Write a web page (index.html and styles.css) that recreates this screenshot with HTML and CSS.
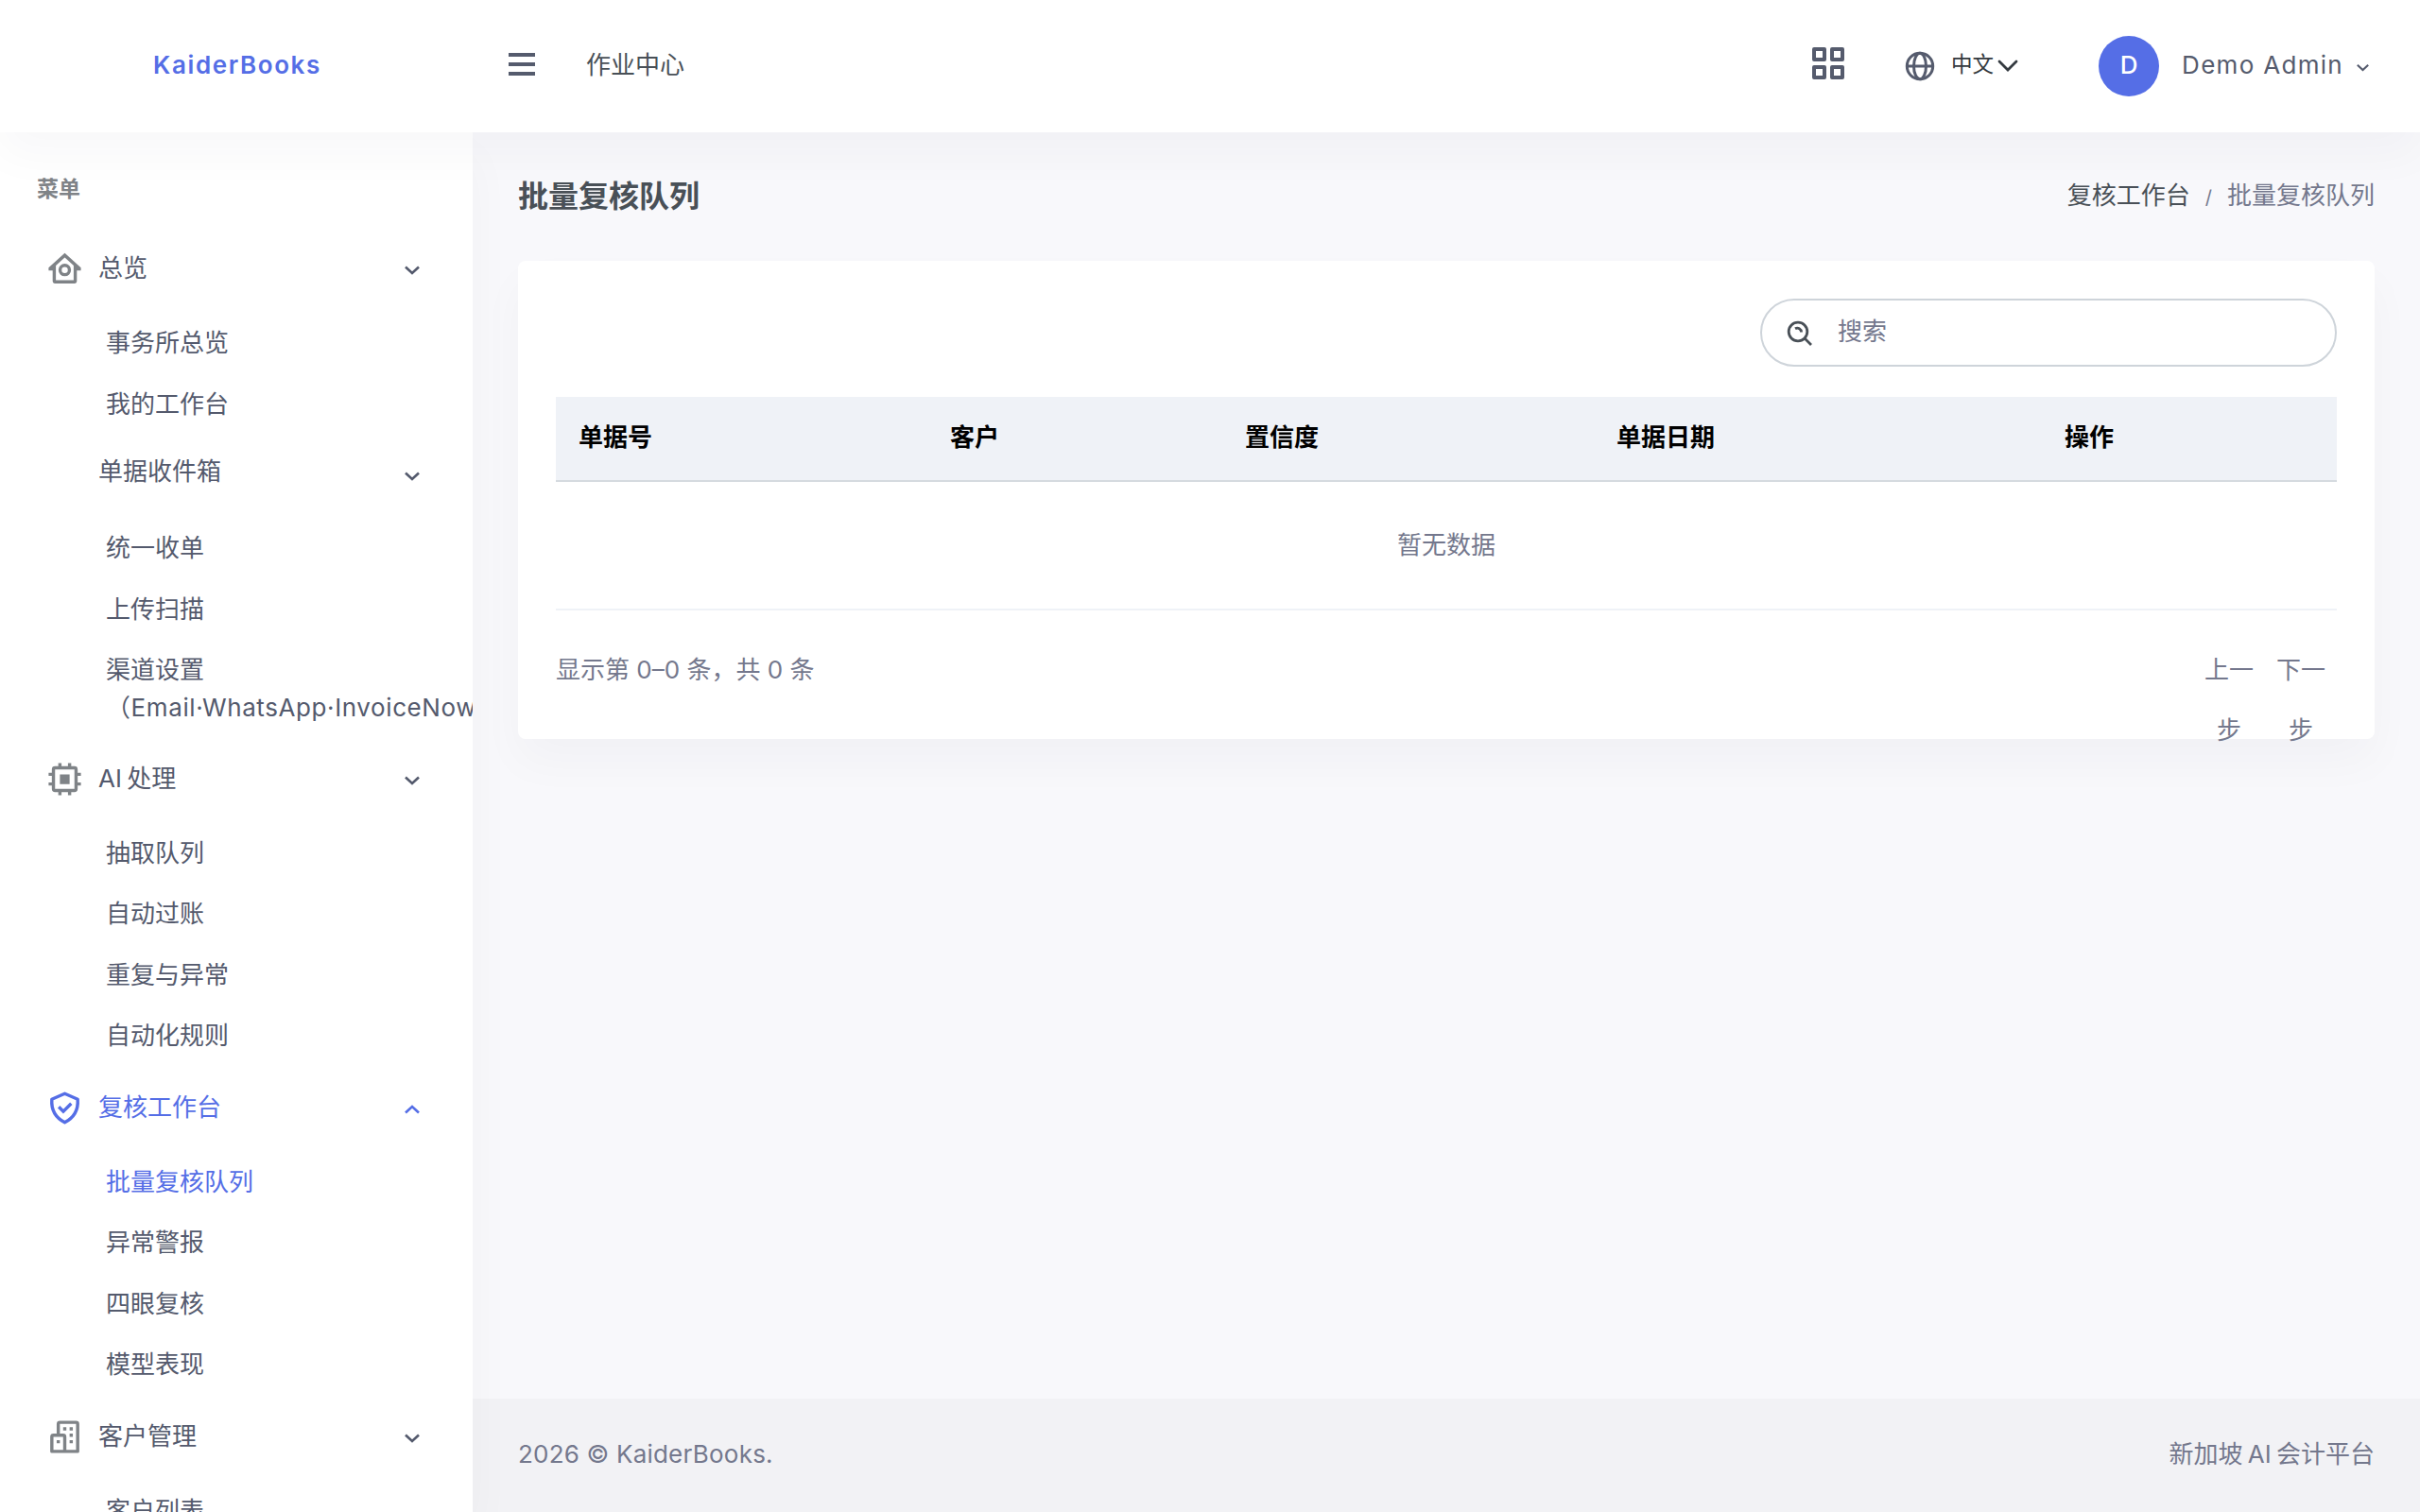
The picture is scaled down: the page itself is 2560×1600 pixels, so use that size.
FILE: index.html
```
<!DOCTYPE html>
<html lang="zh-CN">
<head>
    <meta charset="UTF-8">
    <meta name="viewport" content="width=device-width, initial-scale=1.0">
    <title>批量复核队列 | KaiderBooks</title>
    <link rel="stylesheet" href="styles.css">
</head>
<body>

    <!-- Shared icons -->
    <svg class="sprite">
        <symbol id="chevron" viewBox="0 0 16 10">
            <path d="M1 1.500 8 8l7-6.500" fill="none" stroke="currentColor" stroke-width="2.600"/>
        </symbol>
        <symbol id="chevron-thin" viewBox="0 0 22 14">
            <path d="M2 2l9 9 9-9" fill="none" stroke="currentColor" stroke-width="2.800" stroke-linecap="round"/>
        </symbol>
        <symbol id="home" viewBox="0 0 24 24">
            <path d="M12 2.200 2 11.300V13h2.500v6.500A1.500 1.500 0 0 0 6 21h12a1.500 1.500 0 0 0 1.500-1.500V13H22v-1.700zM6.500 19v-9L12 5l5.500 5v9z" fill="currentColor" fill-rule="evenodd"/>
            <circle cx="12" cy="12.700" r="2.900" fill="none" stroke="currentColor" stroke-width="2"/>
        </symbol>
        <symbol id="chip" viewBox="0 0 24 24">
            <rect x="5" y="5" width="14" height="14" rx="1" fill="none" stroke="currentColor" stroke-width="2"/>
            <path d="M9 9h6v6H9zM8 2h2v3H8zM14 2h2v3h-2zM8 19h2v3H8zM14 19h2v3h-2zM2 8h3v2H2zM2 14h3v2H2zM19 8h3v2h-3zM19 14h3v2h-3z" fill="currentColor"/>
        </symbol>
        <symbol id="shield" viewBox="0 0 24 24">
            <path d="M12 3.100 4 6.600C3.600 12 5.500 17.500 12 20.900 18.500 17.500 20.400 12 20 6.600z" fill="none" stroke="currentColor" stroke-width="2" stroke-linejoin="round"/>
            <path d="m8.300 11.300 2.800 2.800 4.900-4.900" fill="none" stroke="currentColor" stroke-width="2"/>
        </symbol>
        <symbol id="building" viewBox="0 0 24 24">
            <path d="M8 11V4a1 1 0 0 1 1-1h10a1 1 0 0 1 1 1v17H4v-9a1 1 0 0 1 1-1h6a1 1 0 0 1 1 1v9" fill="none" stroke="currentColor" stroke-width="2" stroke-linejoin="round"/>
            <path d="M11 6h2v2h-2zM15 6h2v2h-2zM15 10h2v2h-2zM15 14h2v2h-2zM7 14h2v2H7z" fill="currentColor"/>
        </symbol>
    </svg>

    <header class="topbar">
        <div class="brand">KaiderBooks</div>
        <svg class="menu-icon" viewBox="0 0 28 24"><path d="M0 2h28M0 12h28M0 22h28" stroke="currentColor" stroke-width="4"/></svg>
        <a class="job-center">作业中心</a>
        <div class="topbar-right">
            <svg class="grid-icon" viewBox="0 0 34 34">
                <path d="M2 2h11v11H2zM21 2h11v11H21zM2 21h11v11H2zM21 21h11v11H21z" fill="none" stroke="currentColor" stroke-width="4" stroke-linejoin="round"/>
            </svg>
            <div class="lang">
                <svg class="globe" viewBox="0 0 32 32">
                    <g fill="none" stroke="currentColor" stroke-width="3">
                        <circle cx="16" cy="16" r="13.700"/>
                        <ellipse cx="16" cy="16" rx="6.500" ry="13.700"/>
                        <path d="M2 16h28"/>
                    </g>
                </svg>
                <span>中文</span>
                <svg class="lang-arrow"><use href="#chevron-thin"/></svg>
            </div>
            <div class="user">
                <div class="avatar">D</div>
                <span class="user-name">Demo Admin</span>
                <svg class="user-arrow"><use href="#chevron"/></svg>
            </div>
        </div>
    </header>

    <div class="layout">
        <nav class="sidebar">
            <div class="menu-title">菜单</div>

            <div class="menu-group">
                <div class="menu-head"><svg class="icon"><use href="#home"/></svg><span>总览</span><svg class="arrow"><use href="#chevron"/></svg></div>
                <ul>
                    <li>事务所总览</li>
                    <li>我的工作台</li>
                </ul>
            </div>

            <div class="menu-group">
                <div class="menu-head no-icon"><span>单据收件箱</span><svg class="arrow"><use href="#chevron"/></svg></div>
                <ul>
                    <li>统一收单</li>
                    <li>上传扫描</li>
                    <li class="channels">渠道设置<br><span>（Email·WhatsApp·InvoiceNow）</span></li>
                </ul>
            </div>

            <div class="menu-group">
                <div class="menu-head"><svg class="icon"><use href="#chip"/></svg><span class="latin">AI 处理</span><svg class="arrow"><use href="#chevron"/></svg></div>
                <ul>
                    <li>抽取队列</li>
                    <li>自动过账</li>
                    <li>重复与异常</li>
                    <li>自动化规则</li>
                </ul>
            </div>

            <div class="menu-group open">
                <div class="menu-head"><svg class="icon"><use href="#shield"/></svg><span>复核工作台</span><svg class="arrow"><use href="#chevron"/></svg></div>
                <ul>
                    <li class="active">批量复核队列</li>
                    <li>异常警报</li>
                    <li>四眼复核</li>
                    <li>模型表现</li>
                </ul>
            </div>

            <div class="menu-group">
                <div class="menu-head"><svg class="icon"><use href="#building"/></svg><span>客户管理</span><svg class="arrow"><use href="#chevron"/></svg></div>
                <ul>
                    <li>客户列表</li>
                </ul>
            </div>
        </nav>

        <main class="content">
            <div class="page-head">
                <h4>批量复核队列</h4>
                <div class="breadcrumb"><a>复核工作台</a><i>/</i><span>批量复核队列</span></div>
            </div>

            <section class="card">
                <div class="search">
                    <svg viewBox="0 0 28 28">
                        <g fill="none" stroke="currentColor" stroke-width="2.800">
                            <circle cx="12" cy="12" r="9.800"/>
                            <path d="m19 19 7 7M9 8.800c3-1.800 6.500.2 6.500 3.700"/>
                        </g>
                    </svg>
                    <span>搜索</span>
                </div>

                <table>
                    <colgroup>
                        <col class="col-no"><col class="col-client"><col class="col-score"><col class="col-date"><col>
                    </colgroup>
                    <thead>
                        <tr><th>单据号</th><th>客户</th><th>置信度</th><th>单据日期</th><th>操作</th></tr>
                    </thead>
                    <tbody>
                        <tr><td colspan="5">暂无数据</td></tr>
                    </tbody>
                </table>

                <div class="table-foot">
                    <div class="count">显示第 0–0 条，共 0 条</div>
                    <div class="pager"><a>上一步</a><a>下一步</a></div>
                </div>
            </section>

            <footer class="footer">
                <span class="copyright">2026 © KaiderBooks.</span>
                <span class="latin">新加坡 AI 会计平台</span>
            </footer>
        </main>
    </div>

</body>
</html>
```
FILE: styles.css
```
* {
    box-sizing: border-box;
}

body {
    margin: 0;
    height: 1600px;
    overflow: hidden;
    display: flex;
    flex-direction: column;
    font-family: Inter, "Noto Sans CJK SC", sans-serif;
    font-size: 26px;
    line-height: 40px;
    color: #495057;
    background: #f8f8fb;
}

.sprite {
    position: absolute;
    width: 0;
    height: 0;
}

.latin {
    word-spacing: -2px;
}

/* Top bar */
.topbar {
    position: relative;
    z-index: 2;
    flex: none;
    height: 140px;
    display: flex;
    align-items: center;
    background: #fff;
    box-shadow: 0 24px 48px rgba(18, 38, 63, 0.03);
    color: #555b6d;
}

.brand {
    width: 500px;
    padding: 0 0 2px 2px;
    text-align: center;
    font-weight: 600;
    letter-spacing: 1.6px;
    color: #556ee6;
}

.menu-icon {
    width: 28px;
    height: 24px;
    margin-left: 38px;
    margin-bottom: 4px;
}

.job-center {
    margin-left: 54px;
    margin-bottom: 3px;
    color: #495057;
}

.topbar-right {
    margin-left: auto;
    display: flex;
    align-items: center;
}

.grid-icon {
    width: 34px;
    height: 34px;
    margin-right: 64px;
    margin-bottom: 6px;
}

.lang {
    display: flex;
    align-items: center;
    margin-right: 85px;
    font-size: 22.5px;
    color: #343a40;
}

.lang span {
    margin: 0 4px 4px 17px;
}

.globe {
    width: 32px;
    height: 32px;
    color: #555b6d;
}

.lang-arrow {
    width: 22px;
    height: 14px;
}

.user {
    display: flex;
    align-items: center;
    margin-right: 54px;
}

.avatar {
    width: 64px;
    height: 64px;
    border-radius: 50%;
    background: #556ee6;
    color: #fff;
    font-weight: 500;
    line-height: 62px;
    text-align: center;
}

.user-name {
    margin: 0 14px 3px 24px;
    letter-spacing: 1.3px;
}

.user-arrow {
    width: 13px;
    height: 9px;
    margin-top: 2px;
}

/* Sidebar */
.layout {
    flex: 1;
    min-height: 0;
    display: flex;
}

.sidebar {
    position: relative;
    z-index: 1;
    flex: none;
    width: 500px;
    overflow: hidden;
    background: #fff;
    color: #545a6d;
    box-shadow: 0 24px 48px rgba(18, 38, 63, 0.03);
}

.menu-title {
    padding: 40px 40px 24px 39px;
    font-size: 23px;
    font-weight: 600;
    color: #7f8387;
}

.menu-head {
    height: 80px;
    padding: 0 56px 0 48px;
    display: flex;
    align-items: center;
}

.menu-head.no-icon {
    height: 78px;
    padding-left: 104px;
}

.menu-head.no-icon span {
    margin-bottom: 7px;
}

.menu-head .icon {
    width: 41px;
    height: 41px;
    margin-top: 1px;
    margin-right: 15px;
    color: #7f8387;
}

.menu-head .arrow {
    width: 16px;
    height: 10px;
    margin-left: auto;
    margin-top: 4px;
}

.menu-group ul {
    list-style: none;
    margin: 0;
    padding: 7px 0 3px 112px;
}

.menu-group li {
    padding: 12px 0 12.5px;
    white-space: nowrap;
}

.menu-group .channels {
    margin-bottom: -1px;
}

.channels span {
    letter-spacing: 0.6px;
}

.menu-group.open .menu-head,
.menu-group.open .icon,
.menu-group .active {
    color: #556ee6;
}

.menu-group.open .arrow {
    transform: rotate(180deg);
}

/* Content */
.content {
    flex: 1;
    min-width: 0;
    display: flex;
    flex-direction: column;
}

.page-head {
    display: flex;
    justify-content: space-between;
    align-items: center;
    height: 136px;
    padding: 0 48px 1px;
}

.page-head h4 {
    margin: 0;
    font-size: 32px;
    font-weight: 600;
}

.breadcrumb i {
    margin: 0 16px;
    font-size: 20px;
    font-style: normal;
}

.breadcrumb span,
.breadcrumb i {
    color: #74788d;
}

.card {
    height: 506px;
    margin: 0 48px;
    padding: 40px;
    border-radius: 8px;
    background: #fff;
    box-shadow: 0 24px 48px rgba(18, 38, 63, 0.03);
}

.search {
    width: 610px;
    height: 72px;
    margin-left: auto;
    padding: 0 26px;
    display: flex;
    align-items: center;
    border: 2px solid #ced4da;
    border-radius: 36px;
    color: #74788d;
}

.search svg {
    width: 28px;
    height: 28px;
    margin-right: 26px;
    margin-top: 2px;
    color: #495057;
}

.search span {
    margin-bottom: 3px;
}

table {
    width: 100%;
    margin-top: 32px;
    table-layout: fixed;
    border-spacing: 0;
}

.col-no {
    width: 393px;
}

.col-client {
    width: 312px;
}

.col-score {
    width: 393px;
}

.col-date {
    width: 474px;
}

th {
    height: 90px;
    padding: 0 24px 2px;
    border-bottom: 2px solid #d5dadf;
    background: #eff2f7;
    color: #000;
    font-weight: 600;
    text-align: left;
}

td {
    height: 136px;
    padding: 0;
    border-bottom: 2px solid #eff2f7;
    color: #74788d;
    text-align: center;
}

.table-foot {
    display: flex;
    justify-content: space-between;
    margin-top: 31px;
    line-height: 64px;
    color: #74788d;
}

.pager {
    display: flex;
}

.pager a {
    width: 76px;
    padding: 0 12px;
    text-align: center;
}

.footer {
    height: 120px;
    margin-top: auto;
    padding: 0 48px 2px;
    display: flex;
    justify-content: space-between;
    align-items: center;
    background: #f2f2f5;
    color: #74788d;
}

.copyright {
    letter-spacing: 0.2px;
}
```
